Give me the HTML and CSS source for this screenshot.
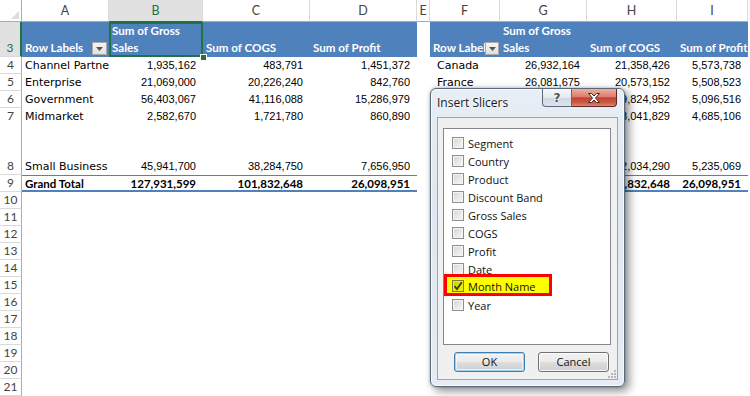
FILE: index.html
```html
<!DOCTYPE html>
<html>
<head>
<meta charset="utf-8">
<link rel="stylesheet" href="styles.css">
</head>
<body>
<div class="sheet">
  <!-- column headers -->
  <div class="c corner"><svg width="21" height="21" viewBox="0 0 21 21"><polygon points="19,11 19,19 11,19" fill="#dcdcdc"/></svg></div>
  <div class="c ch">A</div>
  <div class="c ch sel">B</div>
  <div class="c ch">C</div>
  <div class="c ch">D</div>
  <div class="c ch">E</div>
  <div class="c ch">F</div>
  <div class="c ch">G</div>
  <div class="c ch">H</div>
  <div class="c ch">I</div>

  <!-- row 3 -->
  <div class="c rh rh3">3</div>
  <div class="c hd hd-row"><span class="hd-lbl">Row Labels</span><span class="dd"><svg width="7" height="4" viewBox="0 0 7 4"><polygon points="0,0 7,0 3.5,4" fill="#555"/></svg></span></div>
  <div class="c hd active">Sum of Gross<br>Sales</div>
  <div class="c hd">Sum of COGS</div>
  <div class="c hd">Sum of Profit</div>
  <div class="c"></div>
  <div class="c hd hd-row"><span class="hd-lbl">Row Labels</span><span class="dd dd-r"><svg width="7" height="4" viewBox="0 0 7 4"><polygon points="0,0 7,0 3.5,4" fill="#555"/></svg></span></div>
  <div class="c hd">Sum of Gross<br>Sales</div>
  <div class="c hd">Sum of COGS</div>
  <div class="c hd">Sum of Profit</div>

  <!-- row 4 -->
  <div class="c rh">4</div>
  <div class="c lbl">Channel Partners</div>
  <div class="c num">1,935,162</div>
  <div class="c num">483,791</div>
  <div class="c num">1,451,372</div>
  <div class="c"></div>
  <div class="c lbl lbl-r">Canada</div>
  <div class="c num">26,932,164</div>
  <div class="c num">21,358,426</div>
  <div class="c num">5,573,738</div>

  <!-- row 5 -->
  <div class="c rh">5</div>
  <div class="c lbl">Enterprise</div>
  <div class="c num">21,069,000</div>
  <div class="c num">20,226,240</div>
  <div class="c num">842,760</div>
  <div class="c"></div>
  <div class="c lbl lbl-r">France</div>
  <div class="c num">26,081,675</div>
  <div class="c num">20,573,152</div>
  <div class="c num">5,508,523</div>

  <!-- row 6 -->
  <div class="c rh">6</div>
  <div class="c lbl">Government</div>
  <div class="c num">56,403,067</div>
  <div class="c num">41,116,088</div>
  <div class="c num">15,286,979</div>
  <div class="c"></div>
  <div class="c lbl lbl-r">Germany</div>
  <div class="c num">24,921,468</div>
  <div class="c num">19,824,952</div>
  <div class="c num">5,096,516</div>

  <!-- row 7 (tall) -->
  <div class="c rh rh-top">7</div>
  <div class="c lbl">Midmarket</div>
  <div class="c num">2,582,670</div>
  <div class="c num">1,721,780</div>
  <div class="c num">860,890</div>
  <div class="c"></div>
  <div class="c lbl lbl-r">Mexico</div>
  <div class="c num">22,726,935</div>
  <div class="c num">18,041,829</div>
  <div class="c num">4,685,106</div>

  <!-- row 8 -->
  <div class="c rh">8</div>
  <div class="c lbl">Small Business</div>
  <div class="c num">45,941,700</div>
  <div class="c num">38,284,750</div>
  <div class="c num">7,656,950</div>
  <div class="c"></div>
  <div class="c lbl lbl-r">United States of America</div>
  <div class="c num">27,269,359</div>
  <div class="c num">22,034,290</div>
  <div class="c num">5,235,069</div>

  <!-- row 9 grand total -->
  <div class="c rh">9</div>
  <div class="c lbl gt">Grand Total</div>
  <div class="c num gt">127,931,599</div>
  <div class="c num gt">101,832,648</div>
  <div class="c num gt">26,098,951</div>
  <div class="c"></div>
  <div class="c lbl gt">Grand Total</div>
  <div class="c num gt">127,931,599</div>
  <div class="c num gt">101,832,648</div>
  <div class="c num gt">26,098,951</div>

  <div class="c rh">10</div><div class="c blank"></div>
  <div class="c rh">11</div><div class="c blank"></div>
  <div class="c rh">12</div><div class="c blank"></div>
  <div class="c rh">13</div><div class="c blank"></div>
  <div class="c rh">14</div><div class="c blank"></div>
  <div class="c rh">15</div><div class="c blank"></div>
  <div class="c rh">16</div><div class="c blank"></div>
  <div class="c rh">17</div><div class="c blank"></div>
  <div class="c rh">18</div><div class="c blank"></div>
  <div class="c rh">19</div><div class="c blank"></div>
  <div class="c rh">20</div><div class="c blank"></div>
  <div class="c rh">21</div><div class="c blank"></div>
</div>

<div class="dlg">
  <div class="dlg-title">
    <span class="dlg-text">Insert Slicers</span>
    <div class="tbtns">
      <span class="tb help">?</span>
      <span class="tb close"><svg width="14" height="10" viewBox="0 0 14 10"><path d="M1.5 0.5 L4.5 0.5 L7 3 L9.5 0.5 L12.5 0.5 L8.5 5 L12.5 9.5 L9.5 9.5 L7 7 L4.5 9.5 L1.5 9.5 L5.5 5 Z" fill="#fff" stroke="#4a2622" stroke-width="1" stroke-linejoin="round"/></svg></span>
    </div>
  </div>
  <div class="dlg-body">
    <div class="list">
      <div class="item"><span class="cb"></span>Segment</div>
      <div class="item"><span class="cb"></span>Country</div>
      <div class="item"><span class="cb"></span>Product</div>
      <div class="item"><span class="cb"></span>Discount Band</div>
      <div class="item"><span class="cb"></span>Gross Sales</div>
      <div class="item"><span class="cb"></span>COGS</div>
      <div class="item"><span class="cb"></span>Profit</div>
      <div class="item"><span class="cb"></span>Date</div>
      <div class="item hl"><span class="cb on"><svg width="10" height="10" viewBox="0 0 10 10"><path d="M1.5 5.2 L4 8 L8.8 1.2" fill="none" stroke="#3a3a10" stroke-width="1.8"/></svg></span>Month Name</div>
      <div class="item"><span class="cb"></span>Year</div>
    </div>
    <div class="btns">
      <button class="btn def">OK</button>
      <button class="btn">Cancel</button>
    </div>
    <svg class="grip" width="9" height="9" viewBox="0 0 9 9"><g fill="#b8b8b8"><rect x="7" y="1" width="2" height="2"/><rect x="4" y="4" width="2" height="2"/><rect x="7" y="4" width="2" height="2"/><rect x="1" y="7" width="2" height="2"/><rect x="4" y="7" width="2" height="2"/><rect x="7" y="7" width="2" height="2"/></g></svg>
  </div>
</div>
</body>
</html>
```

FILE: styles.css
```css
html, body {
  margin: 0;
  padding: 0;
}
body {
  width: 750px;
  height: 396px;
  overflow: hidden;
  background: #fff;
  position: relative;
  font-family: "Liberation Sans", Arial, sans-serif;
  color: #000;
}

.sheet {
  display: grid;
  grid-template-columns: 22px 87px 94px 107px 107px 13px 70px 87px 90px 71px;
  grid-template-rows: 22px 35px 17px 17px 17px 50px 17px 17px repeat(12, 17px);
  width: 748px;
}

.c {
  box-sizing: border-box;
  overflow: hidden;
  white-space: nowrap;
  min-width: 0;
}

.corner {
  background: #fff;
  border-right: 1px solid #ababab;
  border-bottom: 1px solid #ababab;
}
.corner svg { display: block; }

.ch {
  background: #fff;
  border-right: 1px solid #dadada;
  border-bottom: 1px solid #ababab;
  text-align: center;
  font-family: "Lato", sans-serif;
  font-size: 12.5px;
  line-height: 21px;
  color: #444;
}
.ch.sel {
  background: #e1e1e1;
  color: #217346;
  border-bottom: 1px solid #217346;
}

.rh {
  background: #fff;
  border-right: 1px solid #ababab;
  border-bottom: 1px solid #dadada;
  text-align: center;
  font-family: "Lato", sans-serif;
  font-size: 12px;
  line-height: 16px;
  color: #444;
}
.rh3 {
  padding-top: 18px;
  color: #217346;
  background: #e1e1e1;
  border-right: 2px solid #217346;
}
.rh-top {
  border-bottom: none;
}

.blank {
  grid-column: 2 / -1;
}

.hd {
  background: #4f81bd;
  color: #fff;
  font-family: "Lato", sans-serif;
  font-weight: 700;
  font-size: 11.6px;
  line-height: 17px;
  padding: 1px 0 0 3px;
  display: flex;
  flex-direction: column;
  justify-content: flex-end;
  padding-bottom: 1px;
}
.hd-row {
  flex-direction: row;
  align-items: flex-end;
  padding-right: 1px;
}
.hd-lbl {
  flex: 1;
  min-width: 0;
  overflow: hidden;
}
.dd {
  flex: none;
  width: 15px;
  height: 13px;
  box-sizing: border-box;
  margin: 0 1px 1px 0;
  background: linear-gradient(#f4f4f4, #e0e0e0);
  border: 1px solid #a9a9a9;
  display: flex;
  align-items: center;
  justify-content: center;
}
.dd-r {
  width: 14px;
  margin-right: 0;
}

.active {
  position: relative;
  overflow: visible;
  box-shadow: inset 0 0 0 2px #217346;
}
.active::after {
  content: "";
  position: absolute;
  right: -4px;
  bottom: -4px;
  width: 5px;
  height: 5px;
  background: #217346;
  border: 1px solid #fff;
}

.lbl {
  font-family: "DejaVu Sans", sans-serif;
  font-size: 11px;
  line-height: 17px;
  padding-left: 3px;
  text-overflow: clip;
}
.lbl-r {
  padding-left: 7px;
}
.num {
  font-size: 11px;
  line-height: 17px;
  text-align: right;
  padding-right: 7px;
}
.gt {
  font-family: "Lato", sans-serif;
  font-weight: 700;
  font-size: 11.5px;
  line-height: 15px;
  border-top: 1px solid #4f81bd;
  border-bottom: 2px solid #4f81bd;
}

/* ---------- dialog ---------- */
.dlg {
  position: absolute;
  left: 430px;
  top: 88px;
  width: 195px;
  height: 299px;
  box-sizing: border-box;
  border: 1px solid #59687a;
  border-radius: 6px;
  background: linear-gradient(180deg, #e8eef5 0%, #dfe7f0 40%, #e6ecf3 100%);
  box-shadow: 4px 4px 10px rgba(0, 0, 0, 0.45), 0 0 3px rgba(0, 0, 0, 0.3), inset 0 0 0 1px rgba(255, 255, 255, 0.75);
  display: flex;
  flex-direction: column;
  padding: 0 6px 6px 6px;
  font-family: "Open Sans", sans-serif;
}
.dlg-title {
  height: 28px;
  flex: none;
  display: flex;
  align-items: flex-start;
}
.dlg-text {
  margin-top: 6px;
  font-size: 12px;
  line-height: 16px;
  color: #1a1a1a;
  text-shadow: 0 0 4px #fff;
}
.tbtns {
  margin-left: auto;
  margin-right: 1px;
  display: flex;
}
.tb {
  height: 18px;
  box-sizing: border-box;
  display: flex;
  align-items: center;
  justify-content: center;
}
.help {
  width: 30px;
  border: 1px solid #5b6b7d;
  border-top: none;
  border-radius: 0 0 0 4px;
  background: linear-gradient(#f6f8fb 0%, #e4e9ef 50%, #cfd7e1 51%, #dde4ec 100%);
  font-family: "DejaVu Sans", sans-serif;
  font-weight: 700;
  font-size: 12px;
  color: #4a5563;
  text-shadow: 0 0 2px #fff, 0 0 2px #fff;
}
.close {
  width: 45px;
  border: 1px solid #5a2a24;
  border-top: none;
  border-left: none;
  border-radius: 0 0 4px 0;
  background: linear-gradient(#ecae9f 0%, #dc7f6e 45%, #c5412f 52%, #cc5a44 80%, #e08a70 100%);
}
.close svg { display: block; }

.dlg-body {
  flex: 1;
  background: #f0f0f0;
  border: 1px solid #97a5b5;
  position: relative;
  display: flex;
  flex-direction: column;
  padding: 10px 0 0 5px;
}
.list {
  width: 168px;
  height: 217px;
  box-sizing: border-box;
  border: 1px solid #828790;
  background: #fff;
  padding: 5px 0 0 8px;
  display: flex;
  flex-direction: column;
}
.item {
  height: 18px;
  display: flex;
  align-items: center;
  gap: 4px;
  font-size: 11px;
  color: #111;
  white-space: nowrap;
}
.cb {
  width: 12px;
  height: 12px;
  flex: none;
  box-sizing: border-box;
  border: 1px solid #8e8f8f;
  background: linear-gradient(135deg, #d6d6d6, #f8f8f8);
  box-shadow: inset 0 0 0 1px #f4f4f4;
  display: flex;
  align-items: center;
  justify-content: center;
}
.hl {
  margin: -4px 0 0 -8px;
  width: 108px;
  height: 22px;
  box-sizing: border-box;
  border: 3px solid #ff0000;
  background: #ffff00;
  padding: 2px 0 0 5px;
}
.cb.on {
  border-color: #7c7c3a;
  background: linear-gradient(135deg, #cccc00, #f4f400);
  box-shadow: inset 0 0 0 1px #f0f000;
}
.cb.on svg { display: block; }

.btns {
  display: flex;
  gap: 13px;
  margin-top: 7px;
  padding-left: 11px;
}
.btn {
  width: 71px;
  height: 20px;
  box-sizing: border-box;
  padding: 0;
  border: 1px solid #707070;
  border-radius: 3px;
  background: linear-gradient(#f2f2f2 0%, #ebebeb 50%, #dddddd 51%, #cfcfcf 100%);
  box-shadow: inset 0 0 0 1px rgba(255, 255, 255, 0.8);
  font-family: "Open Sans", sans-serif;
  font-size: 11px;
  color: #111;
  line-height: 16px;
}
.btn.def {
  border-color: #3c7fb1;
  box-shadow: inset 0 0 0 1px #9fd5f3, inset 0 0 0 2px rgba(255, 255, 255, 0.6);
}
.grip {
  position: absolute;
  right: 1px;
  bottom: 1px;
}
```
